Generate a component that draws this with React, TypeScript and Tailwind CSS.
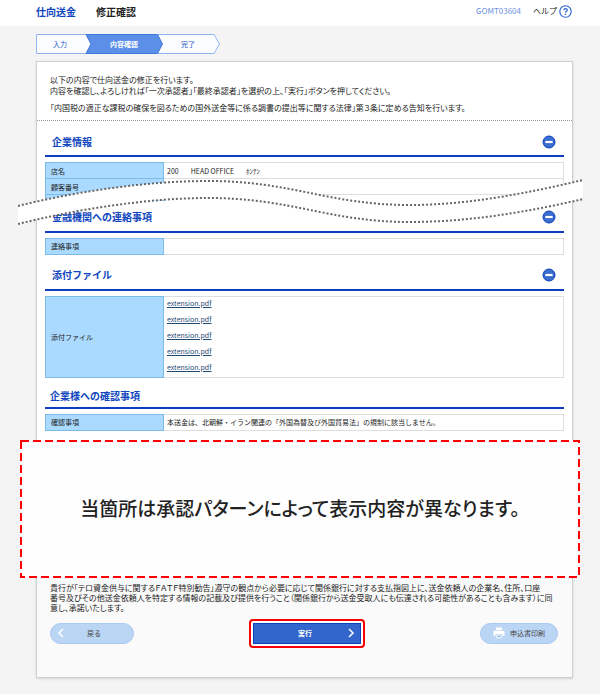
import type { ReactNode } from "react";

const attachments = ["extension.pdf", "extension.pdf", "extension.pdf", "extension.pdf", "extension.pdf"];

const tableClass = "mt-[5px] w-full border-collapse text-[7px] leading-[12px]";
const thClass =
  "w-[118px] border border-[#7dbbe8] bg-[#aadaff] px-[5px] py-0 text-left align-middle font-normal text-[#222]";
const tdClass = "h-4 border border-[#dedede] px-[3px] py-0";

function Steps() {
  return (
    <nav aria-label="進捗" className="relative h-5 w-[184px]">
      <svg className="absolute inset-0" width="184" height="20" viewBox="0 0 184 20" fill="none">
        <path d="M0.5 0.5H178L183.5 10L178 19.5H0.5Z" fill="#fafcff" stroke="#8fb4ee" />
        <path d="M50 0.5H121.5L126.5 10L121.5 19.5H50L55 10Z" fill="#5b8fe8" stroke="#3f78dc" />
      </svg>
      <ol className="relative flex h-5 items-center text-center text-[7px] text-[#2456c0]">
        <li className="w-12">入力</li>
        <li className="w-20 font-bold text-white" aria-current="step">
          内容確認
        </li>
        <li className="w-12">完了</li>
      </ol>
    </nav>
  );
}

function SectionTitle({ children, collapsible = true }: { children: ReactNode; collapsible?: boolean }) {
  return (
    <div
      className={`flex items-center justify-between border-b-2 border-[#0f3fbe] pr-2 ${
        collapsible ? "h-[29px] pl-[7px]" : "h-6 pl-[5px]"
      }`}
    >
      <h2 className="text-[10px] leading-none font-bold text-[#0f46be]">{children}</h2>
      {collapsible && (
        <button type="button" aria-label="閉じる">
          <svg width="14" height="14" viewBox="0 0 14 14">
            <circle cx="7" cy="7" r="6" fill="#3a6fd0" stroke="#0c3fbb" />
            <rect x="3" y="5.5" width="8" height="3" fill="#fff" stroke="#1b4cc0" strokeWidth="0.6" />
          </svg>
        </button>
      )}
    </div>
  );
}

// Torn strip marking the rows left out between two sections
function OmittedStrip() {
  const top = "M0 27C60 12 130 2 190 2C275 2 310 26 392 26C450 26 510 14 565 1";
  const bottom = "M0 45C60 30 130 19 190 19C275 19 310 43 392 43C450 43 510 33 565 20";
  return (
    <svg
      className="pointer-events-none absolute top-[58px] -left-[19px] h-[48px] w-[calc(100%+30px)]"
      viewBox="0 0 565 48"
      preserveAspectRatio="none"
      fill="none"
    >
      <path
        d="M0 27C60 12 130 2 190 2C275 2 310 26 392 26C450 26 510 14 565 1V20C510 33 450 43 392 43C310 43 275 19 190 19C130 19 60 30 0 45Z"
        fill="#fff"
      />
      <path d={top} stroke="#666" strokeWidth="2" strokeDasharray="2 2" />
      <path d={bottom} stroke="#666" strokeWidth="2" strokeDasharray="2 2" />
    </svg>
  );
}

export default function App() {
  return (
    <div
      lang="ja"
      className="min-h-screen bg-[#f4f4f4] pb-4 font-['Noto_Sans_CJK_JP',sans-serif] text-[#222]"
    >
      <header className="flex h-[26px] items-center justify-between bg-white pr-7 pb-1 pl-9">
        <h1 className="flex gap-5 text-[10px] font-bold">
          <span className="text-[#0f46be]">仕向送金</span>
          <span>修正確認</span>
        </h1>
        <div className="flex items-center gap-3 text-[8px]">
          <span className="text-[#6b93de]">GOMT03604</span>
          <a href="#help" className="flex items-center gap-[2px]">
            ヘルプ
            <svg width="13" height="13" viewBox="0 0 13 13" fill="none" stroke="#2a62cf">
              <circle cx="6.5" cy="6.5" r="5.7" strokeWidth="1.1" />
              <path d="M4.8 5.2C4.8 3 8.3 3 8.3 5.1C8.3 6.4 6.5 6.3 6.5 7.8M6.5 8.8V10" strokeWidth="1.2" />
            </svg>
          </a>
        </div>
      </header>

      <div className="px-9 pt-2">
        <Steps />
      </div>

      <main className="mr-[27px] ml-9 mt-[7px] border border-[#cfcfcf] bg-white shadow-sm">
        <div className="border-b border-dotted border-[#999] px-[13px] pt-3 pb-[7px] text-[8px] leading-[11px] whitespace-nowrap [font-feature-settings:'palt']">
          <p>以下の内容で仕向送金の修正を行います。</p>
          <p>内容を確認し、よろしければ「一次承認者」「最終承認者」を選択の上、「実行」ボタンを押してください。</p>
          <p className="mt-[6px]">
            「内国税の適正な課税の確保を図るための国外送金等に係る調書の提出等に関する法律」第３条に定める告知を行います。
          </p>
        </div>

        <div className="relative px-2 pt-[7px]">
          <SectionTitle>企業情報</SectionTitle>
          <table className={tableClass}>
            <tbody>
              <tr>
                <th scope="row" className={thClass}>店名</th>
                <td className={tdClass}>
                  <span className="mr-3">200</span>
                  <span className="mr-3">HEAD OFFICE</span>
                  <span>ﾎﾝﾃﾝ</span>
                </td>
              </tr>
              <tr>
                <th scope="row" className={thClass}>顧客番号</th>
                <td className={tdClass} />
              </tr>
              <tr className="h-[6px]">
                <td className="border border-b-0 border-[#7dbbe8] bg-[#aadaff] p-0" />
                <td className="border border-b-0 border-[#dedede] p-0" />
              </tr>
            </tbody>
          </table>

          <div className="mt-[3px]">
            <SectionTitle>金融機関への連絡事項</SectionTitle>
          </div>
          <table className={tableClass}>
            <tbody>
              <tr>
                <th scope="row" className={thClass}>連絡事項</th>
                <td className={tdClass} />
              </tr>
            </tbody>
          </table>
          <OmittedStrip />
        </div>

        <div className="px-2 pt-[7px]">
          <SectionTitle>添付ファイル</SectionTitle>
          <table className={tableClass}>
            <tbody>
              <tr>
                <th scope="row" className={thClass}>添付ファイル</th>
                <td className={tdClass}>
                  <ul>
                    {attachments.map((name, i) => (
                      <li key={i} className="h-4">
                        <a href="#file" className="text-[#1f4a73] underline">{name}</a>
                      </li>
                    ))}
                  </ul>
                </td>
              </tr>
            </tbody>
          </table>

          <div className="mt-[7px]">
            <SectionTitle collapsible={false}>企業様への確認事項</SectionTitle>
          </div>
          <table className={tableClass}>
            <tbody>
              <tr>
                <th scope="row" className={thClass}>確認事項</th>
                <td className={tdClass}>
                  本送金は、北朝鮮・イラン関連の「外国為替及び外国貿易法」の規制に該当しません。
                </td>
              </tr>
            </tbody>
          </table>
        </div>

        <div className="relative -mr-2 -ml-[17px] mt-[9px] flex h-[138px] items-center justify-center bg-[#fefefe]">
          <svg className="absolute inset-0 h-full w-full p-px" overflow="visible">
            <rect width="100%" height="100%" fill="none" stroke="#f00" strokeWidth="2" strokeDasharray="8 4" />
          </svg>
          <p className="text-[19px] font-medium [font-feature-settings:'palt']">
            当箇所は承認パターンによって表示内容が異なります。
          </p>
        </div>

        <div className="bg-[#fafafa] pt-[5px] pr-[14px] pb-[29px] pl-[13px]">
          <p className="text-[8px] leading-[10px] whitespace-nowrap [font-feature-settings:'palt']">
            貴行が「テロ資金供与に関するＦＡＴＦ特別勧告」遵守の観点から必要に応じて関係銀行に対する支払指図上に、送金依頼人の企業名、住所、口座
            <br />
            番号及びその他送金依頼人を特定する情報の記載及び提供を行うこと（関係銀行から送金受取人にも伝達される可能性があることも含みます）に同
            <br />
            意し、承諾いたします。
          </p>
          <div className="mt-[6px] flex items-center justify-between text-[7px]">
            <button
              type="button"
              className="flex h-[21px] w-[84px] items-center rounded-full border border-[#a6c8f1] bg-[#bbd5f5] px-[6px] text-[#444]"
            >
              <svg width="8" height="10" viewBox="0 0 8 10" fill="none" stroke="#fff" strokeWidth="1.5">
                <path d="M6 1L2 5L6 9" />
              </svg>
              <span className="flex-1 pr-1 text-center">戻る</span>
            </button>
            <div className="rounded border-2 border-[#f60000] bg-white p-[2px]">
              <button
                type="button"
                className="flex h-[21px] w-[108px] items-center border border-[#0c43bd] bg-[#3366cc] px-[5px] font-bold text-white"
              >
                <span className="flex-1 pl-1 text-center">実行</span>
                <svg width="8" height="10" viewBox="0 0 8 10" fill="none" stroke="#fff" strokeWidth="1.5">
                  <path d="M2 1L6 5L2 9" />
                </svg>
              </button>
            </div>
            <button
              type="button"
              className="flex h-[21px] w-[78px] items-center justify-center gap-[5px] rounded-full border border-[#a6c8f1] bg-[#bbd5f5] text-[#444]"
            >
              <svg width="12" height="12" viewBox="0 0 12 12" fill="#fff">
                <path d="M3 0.5H9V3H3ZM1.8 3.8H10.2Q11.5 3.8 11.5 5.2V9H9.5V7H2.5V9H0.5V5.2Q0.5 3.8 1.8 3.8Z" />
                <path d="M3.3 7.8H8.7V11.3H3.3Z" />
                <path d="M4.2 8.7H7.8V10.2H4.2Z" fill="#8fb4e4" />
              </svg>
              申込書印刷
            </button>
          </div>
        </div>
      </main>
    </div>
  );
}
